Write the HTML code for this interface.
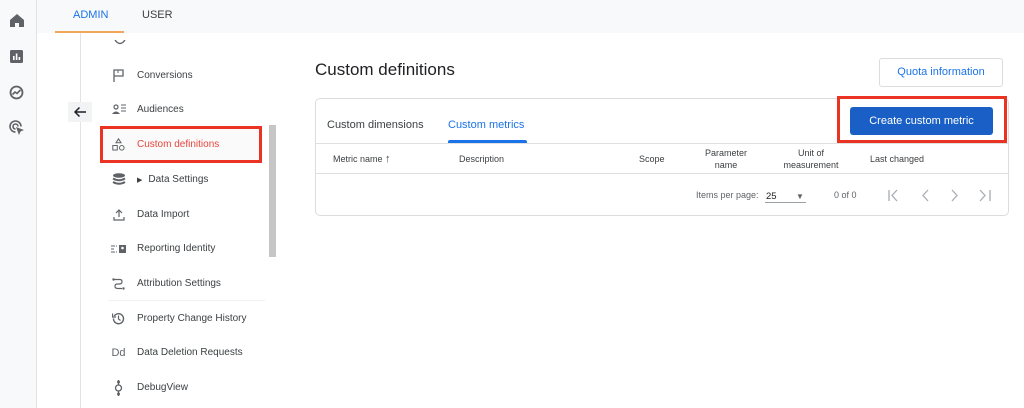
<!DOCTYPE html>
<html><head><style>
*{box-sizing:border-box;margin:0;padding:0}
body{width:1024px;height:408px;overflow:hidden;background:#fff;font-family:"Liberation Sans",sans-serif;position:relative;color:#3c4043}
.abs{position:absolute}
.rail{left:0;top:0;width:37px;height:408px;background:#f8f9fa;border-right:1px solid #e3e3e3}
.top{left:37px;top:0;width:987px;height:33px;background:#f8f9fa}
.tab{top:9px;font-size:11px}
.nav{left:100px;width:165px;height:35px;font-size:10px;color:#3c4043;display:flex;align-items:center}
.nav .ic{width:37px;display:flex;justify-content:center;color:#5f6368}
svg{display:block}
.th{font-size:9px;color:#3c4043;text-align:center;line-height:12px}
</style></head><body>
<div class="abs rail"></div>
<svg class="abs" style="left:10px;top:14px" width="14" height="13" viewBox="0 0 14 13"><path d="M7 0L0 6V13H5V9H9V13H14V6Z" fill="#5f6368"/></svg>
<svg class="abs" style="left:10px;top:50px" width="13" height="13" viewBox="0 0 13 13"><rect width="13" height="13" rx="1.5" fill="#5f6368"/><rect x="3" y="6" width="1.6" height="4" fill="#fff"/><rect x="5.8" y="3.5" width="1.6" height="6.5" fill="#fff"/><rect x="8.6" y="7" width="1.6" height="3" fill="#fff"/></svg>
<svg class="abs" style="left:9px;top:85px" width="15" height="15" viewBox="0 0 15 15"><circle cx="7.5" cy="7.5" r="6" fill="none" stroke="#5f6368" stroke-width="1.8"/><path d="M3.5 9.5L6 7L8 8.5L11.5 5" fill="none" stroke="#5f6368" stroke-width="1.6"/></svg>
<svg class="abs" style="left:9px;top:120px" width="16" height="16" viewBox="0 0 16 16"><path d="M12 6.5A5.5 5.5 0 1 0 6.5 12" fill="none" stroke="#5f6368" stroke-width="1.6"/><path d="M9 6.5A2.5 2.5 0 1 0 6.5 9" fill="none" stroke="#5f6368" stroke-width="1.6"/><path d="M7 7L15 10L11.5 11.5L10 15Z" fill="#5f6368"/></svg>
<div class="abs top"></div>
<div class="abs tab" style="left:73px;color:#1a73e8">ADMIN</div>
<div class="abs tab" style="left:142px;color:#3c4043">USER</div>
<div class="abs" style="left:55px;top:31px;width:69px;height:2px;background:#f2a65a"></div>
<div class="abs" style="left:80px;top:33px;width:1px;height:375px;background:#e3e3e3"></div>
<svg class="abs" style="left:114px;top:40px" width="12" height="6"><path d="M1 0Q6 7 11 0" fill="none" stroke="#5f6368" stroke-width="1.4"/></svg>
<div class="abs" style="left:68px;top:102px;width:24px;height:20px;background:#f1f3f4;border-radius:2px"></div>
<svg class="abs" style="left:73px;top:106px" width="14" height="12" viewBox="0 0 14 12"><path d="M13 6H2M6.5 1.5L2 6L6.5 10.5" fill="none" stroke="#202124" stroke-width="1.5"/></svg>
<div class="abs nav" style="top:58px"><div class="ic"><svg width="13" height="13" viewBox="0 0 13 13"><path d="M2 13V1H11V7H2" fill="none" stroke="#5f6368" stroke-width="1.3"/><path d="M6 1V4" stroke="#5f6368"/></svg></div><span>Conversions</span></div>
<div class="abs nav" style="top:92px"><div class="ic"><svg width="14" height="11" viewBox="0 0 14 11"><circle cx="4" cy="3" r="2" fill="none" stroke="#5f6368" stroke-width="1.2"/><path d="M0 10Q4 5 8 10Z" fill="#5f6368"/><path d="M9 1H14M9 4H14M9 7H14" stroke="#5f6368" stroke-width="1.1"/></svg></div><span>Audiences</span></div>
<div class="abs" style="left:100px;top:126px;width:162px;height:37px;border:3px solid #ea3323;background:#fafafa"></div>
<div class="abs nav" style="top:127px"><div class="ic"><svg width="13" height="13" viewBox="0 0 13 13"><path d="M6.5 0.8L9 4.8H4Z" fill="none" stroke="#5f6368" stroke-width="1"/><rect x="0.8" y="7.5" width="4.5" height="4.5" fill="none" stroke="#5f6368"/><circle cx="9.8" cy="9.8" r="2.3" fill="none" stroke="#5f6368"/></svg></div><span style="color:#e8453c">Custom definitions</span></div>
<div class="abs nav" style="top:162px"><div class="ic"><svg width="14" height="13" viewBox="0 0 14 13"><ellipse cx="7" cy="2.5" rx="6" ry="2.3" fill="#5f6368"/><path d="M1 5.5Q7 9 13 5.5M1 9Q7 12.5 13 9" fill="none" stroke="#5f6368" stroke-width="2"/></svg></div><span style="font-size:7px;margin-right:6px">&#9654;</span><span>Data Settings</span></div>
<div class="abs nav" style="top:197px"><div class="ic"><svg width="12" height="12" viewBox="0 0 12 12"><path d="M6 8V1M3 4L6 1L9 4M1 8V11H11V8" fill="none" stroke="#5f6368" stroke-width="1.2"/></svg></div><span>Data Import</span></div>
<div class="abs nav" style="top:231px"><div class="ic"><svg width="16" height="10" viewBox="0 0 16 10"><path d="M0 2H4M0 5H3M0 8H4M5 2H6M5 8H6" stroke="#5f6368"/><rect x="8" y="1" width="7" height="8" fill="#5f6368"/><circle cx="11.5" cy="4" r="1.3" fill="#fff"/></svg></div><span>Reporting Identity</span></div>
<div class="abs nav" style="top:266px"><div class="ic"><svg width="13" height="12" viewBox="0 0 13 12"><circle cx="1.5" cy="1.5" r="1.2" fill="#5f6368"/><path d="M2 1.5H8Q10 1.5 10 4Q10 6 7 6H5Q3 6 3 8.5Q3 10.5 6 10.5H10" fill="none" stroke="#5f6368" stroke-width="1.2"/><circle cx="11.5" cy="10.5" r="1.2" fill="#5f6368"/></svg></div><span>Attribution Settings</span></div>
<div class="abs" style="left:108px;top:300px;width:157px;height:1px;background:#f1f1f1"></div>
<div class="abs nav" style="top:301px"><div class="ic"><svg width="13" height="13" viewBox="0 0 13 13"><path d="M2.3 4A5 5 0 1 1 1.5 6.5" fill="none" stroke="#5f6368" stroke-width="1.4"/><path d="M0.5 1.5V5H4" fill="none" stroke="#5f6368" stroke-width="1.3"/><path d="M6.5 3.5V7L8.5 8.5" fill="none" stroke="#5f6368" stroke-width="1.2"/></svg></div><span>Property Change History</span></div>
<div class="abs nav" style="top:335px"><div class="ic" style="font-size:11px;color:#5f6368">Dd</div><span>Data Deletion Requests</span></div>
<div class="abs nav" style="top:370px"><div class="ic"><svg width="9" height="16" viewBox="0 0 9 16"><path d="M4.5 0V5M4.5 11V16" stroke="#5f6368" stroke-width="1.3"/><circle cx="4.5" cy="2" r="1.5" fill="#5f6368"/><circle cx="4.5" cy="8" r="3" fill="none" stroke="#5f6368" stroke-width="1.3"/><circle cx="4.5" cy="14" r="1.5" fill="#5f6368"/></svg></div><span>DebugView</span></div>
<div class="abs" style="left:269px;top:125px;width:7px;height:132px;background:#c6c6c6"></div>
<div class="abs" style="left:315px;top:60px;font-size:17px;color:#202124">Custom definitions</div>
<div class="abs" style="left:879px;top:58px;width:124px;height:29px;border:1px solid #dadce0;border-radius:3px;font-size:11px;color:#1a73e8;text-align:center;line-height:27px">Quota information</div>
<div class="abs" style="left:315px;top:98px;width:694px;height:118px;border:1px solid #dadce0;border-radius:5px"></div>
<div class="abs" style="left:316px;top:143px;width:692px;height:1px;background:#e0e0e0"></div>
<div class="abs" style="left:316px;top:173px;width:692px;height:1px;background:#e0e0e0"></div>
<div class="abs" style="left:327px;top:119px;font-size:11px;color:#3c4043">Custom dimensions</div>
<div class="abs" style="left:448px;top:119px;font-size:11px;color:#1a73e8">Custom metrics</div>
<div class="abs" style="left:448px;top:140px;width:79px;height:3px;background:#1a73e8;border-radius:2px 2px 0 0"></div>
<div class="abs" style="left:837px;top:96px;width:170px;height:47px;border:3px solid #ea3323"></div>
<div class="abs" style="left:850px;top:107px;width:143px;height:28px;background:#1a5fc6;border-radius:3px;color:#fff;font-size:11px;text-align:center;line-height:28px">Create custom metric</div>
<div class="abs th" style="left:333px;top:153px">Metric name <span style="font-size:11px">&#8593;</span></div>
<div class="abs th" style="left:459px;top:153px">Description</div>
<div class="abs th" style="left:639px;top:153px">Scope</div>
<div class="abs th" style="left:701px;top:147px;width:50px">Parameter<br>name</div>
<div class="abs th" style="left:778px;top:147px;width:66px">Unit of<br>measurement</div>
<div class="abs th" style="left:870px;top:153px">Last changed</div>
<div class="abs" style="left:696px;top:190px;font-size:9px;color:#5f6368">Items per page:</div>
<div class="abs" style="left:766px;top:191px;font-size:9.5px;color:#202124">25</div>
<div class="abs" style="left:796px;top:192px;font-size:8px;color:#5f6368">&#9660;</div>
<div class="abs" style="left:765px;top:202px;width:41px;height:1px;background:#9aa0a6"></div>
<div class="abs" style="left:834px;top:190px;font-size:9px;color:#5f6368">0 of 0</div>
<svg class="abs" style="left:888px;top:189px" width="104" height="13" viewBox="0 0 104 13"><g fill="none" stroke="#a8acb1" stroke-width="1.3"><path d="M1 1V12M9 1L4 6.5L9 12"/><path d="M40 1L35 6.5L40 12"/><path d="M64 1L69 6.5L64 12"/><path d="M92 1L97 6.5L92 12M102 1V12"/></g></svg>
</body></html>
